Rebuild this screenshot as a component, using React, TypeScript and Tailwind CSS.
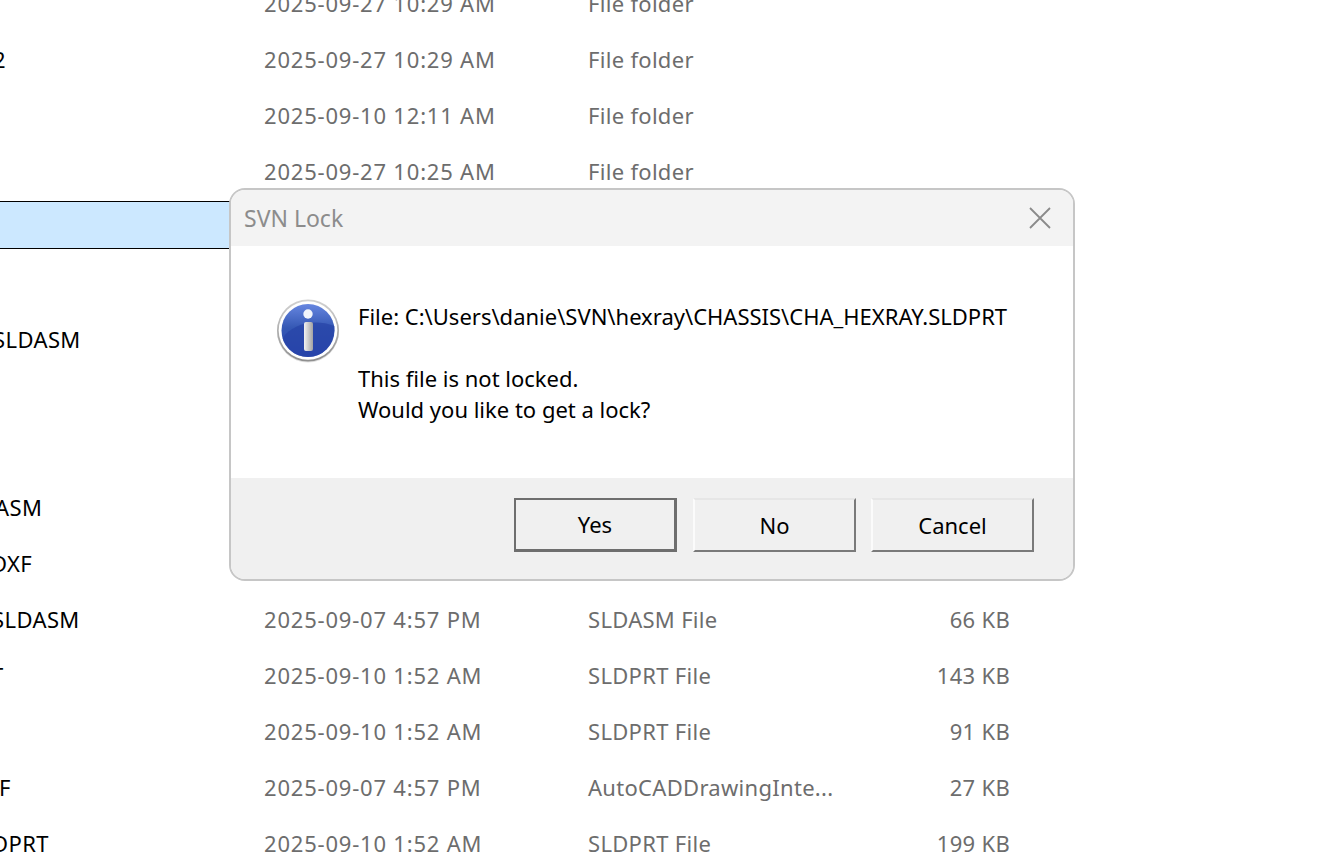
const rows = [
  { name: '', nameClass: '', date: '2025-09-27 10:29 AM', type: 'File folder', size: '' },
  { name: '2', nameClass: '-ml-[7px]', date: '2025-09-27 10:29 AM', type: 'File folder', size: '' },
  { name: '', nameClass: '', date: '2025-09-10 12:11 AM', type: 'File folder', size: '' },
  { name: '', nameClass: '', date: '2025-09-27 10:25 AM', type: 'File folder', size: '' },
  { name: '', nameClass: '', date: '', type: '', size: '', selected: true },
  { name: '', nameClass: '', date: '', type: '', size: '' },
  { name: 'SLDASM', nameClass: '-ml-[7px]', date: '', type: '', size: '' },
  { name: '', nameClass: '', date: '', type: '', size: '' },
  { name: '', nameClass: '', date: '', type: '', size: '' },
  { name: 'ASM', nameClass: '-ml-[5px]', date: '', type: '', size: '' },
  { name: 'DXF', nameClass: '-ml-[9px]', date: '', type: '', size: '' },
  { name: 'SLDASM', nameClass: '-ml-[8px]', date: '2025-09-07 4:57 PM', type: 'SLDASM File', size: '66 KB' },
  { name: 'T', nameClass: '-ml-[9px]', date: '2025-09-10 1:52 AM', type: 'SLDPRT File', size: '143 KB' },
  { name: '', nameClass: '', date: '2025-09-10 1:52 AM', type: 'SLDPRT File', size: '91 KB' },
  { name: 'F', nameClass: '-ml-[1px]', date: '2025-09-07 4:57 PM', type: 'AutoCADDrawingInte...', size: '27 KB' },
  { name: 'DPRT', nameClass: '-ml-[8px]', date: '2025-09-10 1:52 AM', type: 'SLDPRT File', size: '199 KB' },
]

function InfoIcon() {
  return (
    <svg width="64" height="66" viewBox="0 0 64 66" className="shrink-0">
      <defs>
        <linearGradient id="ring" x1="0" y1="0" x2="0" y2="1">
          <stop offset="0" stopColor="#d2d2d2" />
          <stop offset="1" stopColor="#8e8e8e" />
        </linearGradient>
        <linearGradient id="disc" x1="0" y1="0" x2="0" y2="1">
          <stop offset="0" stopColor="#6686e0" />
          <stop offset="0.45" stopColor="#3558b4" />
          <stop offset="1" stopColor="#2a46b0" />
        </linearGradient>
        <linearGradient id="stem" x1="0" y1="0" x2="1" y2="0">
          <stop offset="0" stopColor="#f2f2f2" />
          <stop offset="1" stopColor="#a2a2a2" />
        </linearGradient>
      </defs>
      <circle cx="31" cy="32.5" r="31" fill="#000" opacity="0.12" />
      <circle cx="31" cy="31.5" r="31" fill="url(#ring)" />
      <circle cx="31" cy="31.5" r="29.3" fill="#fff" />
      <circle cx="31" cy="31.5" r="26.5" fill="url(#disc)" />
      <path d="M5.5 39 C15 25 37 19 57.5 27 C58 40 50 58 31 58 C18 58 8 49 5.5 39 Z" fill="#2743a6" opacity="0.7" />
      <circle cx="31" cy="15" r="4.7" fill="#f2f5fb" />
      <rect x="27" y="23" width="9" height="29" rx="2" fill="url(#stem)" />
    </svg>
  )
}

function DialogButton({ label, isDefault, className }: { label: string; isDefault?: boolean; className?: string }) {
  return (
    <button
      className={
        (isDefault
          ? 'w-[163px] h-[54px] bg-[#f0f0f0] text-black border-2 border-[#6e6e6e] border-b-[3px] border-r-[3px] '
          : 'w-[163px] h-[54px] bg-[#f0f0f0] text-black border-2 border-t-[#e6e6e6] border-l-[#fbfbfb] border-r-[#7a7a7a] border-b-[#7a7a7a] ') +
        (className ?? '')
      }
    >
      {label}
    </button>
  )
}

export default function App() {
  return (
    <div
      className="relative w-[1341px] h-[852px] overflow-hidden bg-white text-[22px]"
      style={{ fontFamily: '"Noto Sans", "Open Sans", sans-serif' }}
    >
      {/* file list behind the dialog */}
      <div className="flex flex-col gap-2 -mt-[23px]">
        {rows.map((r, i) => (
          <div
            key={i}
            className={
              r.selected
                ? 'flex items-center h-[48px] w-[1040px] bg-[#cce8ff] border-y border-black'
                : 'flex items-center h-[48px] w-[1040px] pt-[4px]'
            }
          >
            <div className="w-[264px] overflow-hidden whitespace-nowrap text-black tracking-[0.4px]">
              <div className={r.nameClass}>{r.name}</div>
            </div>
            <div className="w-[324px] text-[#6d6d6d] whitespace-nowrap tracking-[0.8px]">{r.date}</div>
            <div className="w-[260px] text-[#6d6d6d] whitespace-nowrap tracking-[0.3px]">{r.type}</div>
            <div className="w-[162px] text-right text-[#6d6d6d] whitespace-nowrap tracking-[0.3px]">{r.size}</div>
          </div>
        ))}
      </div>

      {/* SVN Lock dialog */}
      <div className="absolute left-[229px] top-[188px] w-[846px] h-[393px] flex flex-col bg-white border-2 border-[#c6c6c6] rounded-[16px] overflow-hidden">
        <div className="h-[56px] flex items-center justify-between bg-[#f3f3f3] pl-[13px] pr-[21px]">
          <span className="text-[#8c8c8c] text-[23px]">SVN Lock</span>
          <svg width="24" height="24" viewBox="0 0 24 24">
            <path d="M2 2 L22 22 M22 2 L2 22" stroke="#8a8a8a" strokeWidth="1.8" fill="none" />
          </svg>
        </div>
        <div className="h-[232px] flex items-start pl-[46px] pt-[53px] gap-[17px] text-black">
          <InfoIcon />
          <div className="flex flex-col leading-[31px] pt-[2px]">
            <div>File: C:\Users\danie\SVN\hexray\CHASSIS\CHA_HEXRAY.SLDPRT</div>
            <div>&nbsp;</div>
            <div>This file is not locked.</div>
            <div>Would you like to get a lock?</div>
          </div>
        </div>
        <div className="flex-1 flex justify-end items-start gap-[16px] bg-[#f0f0f0] pt-[20px] pr-[39px]">
          <DialogButton label="Yes" isDefault />
          <DialogButton label="No" />
          <DialogButton label="Cancel" className="-ml-[1px]" />
        </div>
      </div>
    </div>
  )
}
